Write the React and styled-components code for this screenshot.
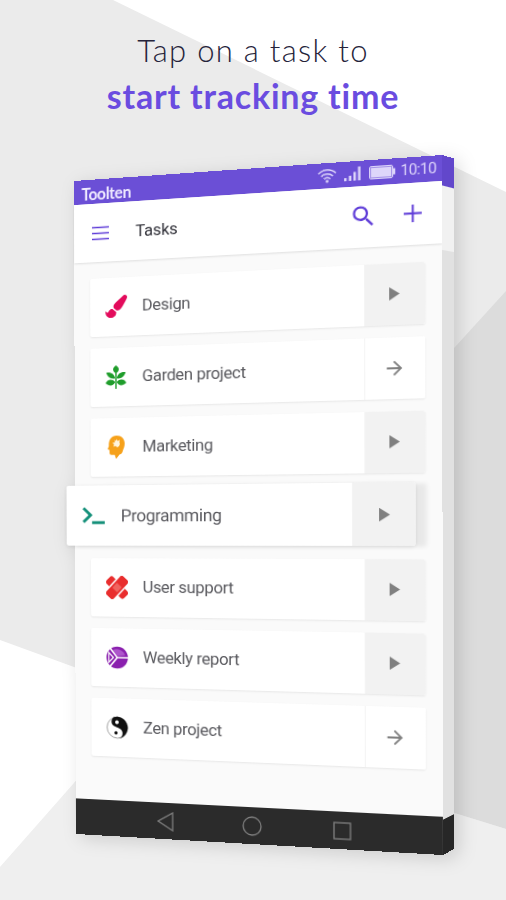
import styled, { createGlobalStyle } from "styled-components";
import { FaPaintBrush } from "react-icons/fa";
import { MdSearch, MdArrowForward } from "react-icons/md";

// matrix3d that maps a w x h box on four corners: tl, tr, br, bl
const project = (w, h, [[x0, y0], [x1, y1], [x2, y2], [x3, y3]]) => {
  const dx1 = x1 - x2;
  const dx2 = x3 - x2;
  const dx3 = x0 - x1 + x2 - x3;
  const dy1 = y1 - y2;
  const dy2 = y3 - y2;
  const dy3 = y0 - y1 + y2 - y3;
  const det = dx1 * dy2 - dx2 * dy1;
  const g = (dx3 * dy2 - dx2 * dy3) / det;
  const k = (dx1 * dy3 - dx3 * dy1) / det;
  const m = [
    (x1 - x0 + g * x1) / w, (y1 - y0 + g * y1) / w, 0, g / w,
    (x3 - x0 + k * x3) / h, (y3 - y0 + k * y3) / h, 0, k / h,
    0, 0, 1, 0,
    x0, y0, 0, 1,
  ];
  return `matrix3d(${m.map((n) => n.toFixed(9)).join(",")})`;
};

const GlobalStyle = createGlobalStyle`
  body {
    margin: 0;
    background: #ebebeb;
  }
  * {
    box-sizing: border-box;
  }
`;

const Page = styled.main`
  position: relative;
  width: 506px;
  height: 900px;
  overflow: hidden;
  background-color: #ebebeb;
  font-family: Roboto, "Liberation Sans", sans-serif;
`;

const Facet = styled.div`
  position: absolute;
  inset: 0;
  background-color: ${(props) => props.$color};
  clip-path: polygon(${(props) => props.$points});
`;

const Headline = styled.h1`
  position: relative;
  height: 155px;
  margin: 0;
  padding-top: 30px;
  text-align: center;
  font-family: Lato, sans-serif;
  font-size: 31px;
  font-weight: 300;
  line-height: 40px;
  letter-spacing: 1.3px;
  color: #25233a;
`;

const Strong = styled.span`
  display: block;
  margin-top: 6px;
  font-size: 34px;
  font-weight: 700;
  letter-spacing: 0.8px;
  color: #6a4ce0;
`;

const Device = styled.div`
  display: flex;
  margin-left: 74px;
  filter: drop-shadow(5px 4px 9px rgba(0, 0, 0, 0.14));
`;

const Front = styled.section`
  display: flex;
  flex-direction: column;
  flex: none;
  width: 368px;
  height: 676px;
  background-color: #fafafa;
  transform-origin: 0 0;
  transform: ${project(368, 676, [[0, 26], [368, 0], [369, 700], [2, 679]])};
`;

const Side = styled.div`
  display: flex;
  flex-direction: column;
  flex: none;
  width: 12px;
  height: 676px;
  background-color: #e1e1e1;
  transform-origin: 0 0;
  transform: ${project(12, 676, [[0, 0], [12, 3.5], [12, 694], [1, 700]])};
`;

const SideBand = styled.div`
  height: ${(props) => props.$height}px;
  margin-top: ${(props) => (props.$last ? "auto" : 0)};
  background-color: ${(props) => props.$color};
`;

const StatusBar = styled.div`
  display: flex;
  align-items: center;
  height: 25px;
  padding: 0 5px 0 8px;
  background-color: #6b4fd6;
  color: #ded6fa;
`;

const Brand = styled.span`
  flex: 1;
  padding-top: 4px;
  font-family: Lato, sans-serif;
  font-size: 16.5px;
  font-weight: 700;
  letter-spacing: -0.4px;
  color: #efeaff;
`;

const StatusIcons = styled.div`
  display: flex;
  align-items: center;
  gap: 7px;
`;

const Clock = styled.span`
  width: 34px;
  margin-left: -2px;
  font-size: 14.5px;
  letter-spacing: -0.5px;
`;

const Toolbar = styled.header`
  display: flex;
  align-items: center;
  height: 60px;
  padding: 0 19px 0 19px;
  background-color: #fff;
  box-shadow: 0 1px 2px rgba(0, 0, 0, 0.11);
  color: #5f3dd8;
`;

const Title = styled.h2`
  flex: 1;
  margin: -1px 0 0 28px;
  font-size: 17px;
  font-weight: 400;
  letter-spacing: -0.2px;
  color: #33333b;
`;

const ToolbarActions = styled.div`
  display: flex;
  align-items: center;
  gap: 25px;
  margin-top: -2px;
`;

const TaskList = styled.ul`
  display: flex;
  flex-direction: column;
  flex: 1;
  gap: 12px;
  margin: 0;
  padding: 16.5px 16.5px 0 16.5px;
  list-style: none;
`;

const Card = styled.li`
  display: flex;
  height: 60px;
  border-radius: 2px;
  background-color: #fff;
  box-shadow: ${(props) =>
    props.$raised
      ? "10px 1px 4px rgba(0, 0, 0, 0.07), 0 1px 4px rgba(0, 0, 0, 0.1)"
      : "0 1px 2px rgba(0, 0, 0, 0.08)"};
  transform: ${(props) =>
    props.$raised ? "translate(-17.7px, -2px) scale(1.05, 1.03)" : "none"};
`;

const TaskIcon = styled.span`
  display: flex;
  align-items: center;
  justify-content: center;
  width: 55px;
  color: ${(props) => props.$color};
`;

const TaskName = styled.span`
  flex: 1;
  align-self: center;
  margin-top: -1px;
  font-size: 17px;
  letter-spacing: -0.35px;
  color: #5a5a5f;
`;

const CardAction = styled.span`
  display: flex;
  align-items: center;
  justify-content: center;
  width: 58px;
  border-left: 1px solid #f4f4f4;
  border-radius: 0 2px 2px 0;
  background-color: ${(props) => (props.$filled ? "#f2f2f2" : "#fff")};
  color: #808080;
`;

const NavBar = styled.nav`
  display: flex;
  align-items: center;
  justify-content: center;
  gap: 70px;
  height: 37px;
  padding-right: 1px;
  background-color: #2b2b2b;
`;

const Wifi = () => (
  <svg width="19" height="15" viewBox="0 0 19 15" fill="none" stroke="currentColor" strokeWidth="1.5">
    <path d="M1 5.2a12.4 12.4 0 0 1 17 0M3.8 8a8.4 8.4 0 0 1 11.4 0M6.4 10.7a4.7 4.7 0 0 1 6.2 0" />
    <circle cx="9.5" cy="13" r="1.4" fill="currentColor" stroke="none" />
  </svg>
);

const Signal = () => (
  <svg width="17" height="15" viewBox="0 0 17 15" fill="currentColor">
    <path d="M0 11h2.4v3H0zM4.6 9H7v5H4.6zM9 5.5h2.4V14H9zM13.4 .5h2.4V14h-2.4z" />
  </svg>
);

const Battery = () => (
  <svg width="25" height="13" viewBox="0 0 25 13">
    <rect x=".5" y=".5" width="22" height="12" rx="1.5" fill="none" stroke="currentColor" />
    <rect x="1.5" y="1.5" width="20" height="10" fill="currentColor" />
    <path d="M23 3.5h2v6h-2z" fill="currentColor" />
  </svg>
);

const Burger = () => (
  <svg width="18" height="15" viewBox="0 0 18 15" stroke="currentColor" strokeWidth="1.7">
    <path d="M0 1.5h18M0 7.5h18M0 13.5h18" />
  </svg>
);

const Plus = () => (
  <svg width="17" height="17" viewBox="0 0 17 17" stroke="currentColor" strokeWidth="1.9">
    <path d="M0 8.5h17M8.5 0v17" />
  </svg>
);

const Play = () => (
  <svg width="10" height="13" viewBox="0 0 10 13">
    <path d="M0 0v13l10-6.5z" fill="currentColor" />
  </svg>
);

const Plant = () => (
  <svg width="22" height="24" viewBox="0 0 22 24" fill="currentColor">
    <path d="M11 0c4 2.800 4 5.400 0 8.200C7 5.400 7 2.800 11 0z" />
    <path d="M10.200 13.200C5.800 14.200 2.200 11.800 .8 7.200c4.800-.8 8.400 1.400 9.400 6zM11.800 13.200c4.400 1 8-1.400 9.400-6-4.800-.8-8.400 1.400-9.400 6z" />
    <path d="M10.200 17C8.500 21 4 21.800 0 18c2.500-4 6.500-4.600 10.200-1zM11.800 17c1.700 4 6.200 4.800 10.200 1-2.500-4-6.500-4.600-10.200-1z" />
    <path d="M10.300 8h1.400v16h-1.400z" />
  </svg>
);

const IdeaHead = () => (
  <svg width="18" height="24" viewBox="0 0 18 24">
    <path
      d="M9.5 0C14.5 0 18 3.5 18 8.3c0 3.5-1.3 5-2 7.5-.4 1.7-1.4 3.5-3.5 3.7L9 24l-1.5-4.3H4c-1.500 0-2-1-2-2.500v-2.400L0 13.700l1.300-3C.8 4.500 3.800 0 9.500 0z"
      fill="currentColor"
    />
    <path
      d="M9.500 3.500l1.200 2 2.200-1-.5 2.500.6 1.800-1 2.200-1.800 1-1.700-1.200-2.400.5 .8-2.400L5 7.200l2.700-.2-.2-2.500 1.500.8z"
      fill="#fff4dd"
    />
  </svg>
);

const Prompt = () => (
  <svg width="23" height="18" viewBox="0 0 23 18" fill="none" stroke="currentColor" strokeWidth="2.9">
    <path d="M1.3 1.5l7.2 7-7.2 7M10 16h13" />
  </svg>
);

const Bandages = () => (
  <svg width="23" height="24" viewBox="0 0 23 24" fill="currentColor">
    <rect x="-1.5" y="7" width="26" height="10" rx="3" transform="rotate(45 11.5 12)" />
    <rect
      x="-2.2"
      y="5.9"
      width="27.4"
      height="12.2"
      rx="3.5"
      transform="rotate(-47 11.5 12)"
      stroke="#fff"
      strokeWidth="1.5"
    />
    <rect x="8" y="8.5" width="7" height="7" fill="#f0645f" transform="rotate(-47 11.5 12)" />
  </svg>
);

const Pie = () => (
  <svg width="23" height="24" viewBox="0 0 23 24">
    <circle cx="11.5" cy="12" r="11.3" fill="currentColor" />
    <path d="M6.5 4.5A9.5 9.5 0 0 1 20 9.5l-8 1z" fill="#ad55cb" />
    <path d="M3.5 1.8L11.5 12H23M11.5 12L3.7 21.5" fill="none" stroke="#fff" strokeWidth="1.7" />
    <path d="M2.7 7v10l4.8-5z" fill="none" stroke="#fff" strokeWidth="1.2" />
  </svg>
);

const YinYang = () => (
  <svg width="23" height="24" viewBox="0 0 23 24">
    <circle cx="11.5" cy="12" r="10.9" fill="#fff" stroke="#888" strokeWidth=".8" />
    <path
      d="M8 1.3A11.2 11.2 0 1 1 13 23.1a5.5 5.5 0 0 0 .8-10.2C10 11.2 6.5 11 5.5 7.5 4.8 4.8 6 2.5 8 1.3z"
      fill="currentColor"
    />
    <circle cx="11" cy="6.5" r="1.9" fill="#fff" />
    <circle cx="10" cy="17.5" r="1.7" fill="currentColor" />
  </svg>
);

const tasks = [
  { name: "Design", color: "#e30b5c", icon: <FaPaintBrush size={23} />, running: true },
  { name: "Garden project", color: "#1f9d2b", icon: <Plant /> },
  { name: "Marketing", color: "#f6a11a", icon: <IdeaHead />, running: true },
  { name: "Programming", color: "#15907a", icon: <Prompt />, running: true, raised: true },
  { name: "User support", color: "#e92d2d", icon: <Bandages />, running: true },
  { name: "Weekly report", color: "#8a1fae", icon: <Pie />, running: true },
  { name: "Zen project", color: "#111", icon: <YinYang /> },
];

const App = () => {
  return (
    <Page>
      <GlobalStyle />
      <Facet $color="#fff" $points="113px 0, 506px 0, 506px 192px" />
      <Facet
        $color="#dcdcdc"
        $points="506px 291px, 455px 347px, 300px 517px, 300px 765px, 506px 829px"
      />
      <Facet
        $color="#efefef"
        $points="0 867px, 74px 783px, 200px 735px, 454px 813px, 506px 829px, 506px 900px, 0 900px"
      />
      <Facet
        $color="#fff"
        $points="0 640px, 74px 667px, 200px 713px, 136px 713px, 74px 783px, 0 867px"
      />
      <Headline>
        Tap on a task to
        <Strong>start tracking time</Strong>
      </Headline>
      <Device>
        <Front>
          <StatusBar>
            <Brand>Toolten</Brand>
            <StatusIcons>
              <Wifi />
              <Signal />
              <Battery />
              <Clock>10:10</Clock>
            </StatusIcons>
          </StatusBar>
          <Toolbar>
            <Burger />
            <Title>Tasks</Title>
            <ToolbarActions>
              <MdSearch size={27} />
              <Plus />
            </ToolbarActions>
          </Toolbar>
          <TaskList>
            {tasks.map((task) => (
              <Card key={task.name} $raised={task.raised}>
                <TaskIcon $color={task.color}>{task.icon}</TaskIcon>
                <TaskName>{task.name}</TaskName>
                <CardAction $filled={task.running}>
                  {task.running ? <Play /> : <MdArrowForward size={22} />}
                </CardAction>
              </Card>
            ))}
          </TaskList>
          <NavBar>
            <svg width="17" height="20" viewBox="0 0 17 20" fill="none" stroke="#808080" strokeWidth="1.3">
              <path d="M16 1v18L1 10z" />
            </svg>
            <svg width="20" height="20" viewBox="0 0 20 20" fill="none" stroke="#808080" strokeWidth="1.3">
              <circle cx="10" cy="10" r="9" />
            </svg>
            <svg width="18" height="18" viewBox="0 0 18 18" fill="none" stroke="#808080" strokeWidth="1.3">
              <rect x="1" y="1" width="16" height="16" />
            </svg>
          </NavBar>
        </Front>
        <Side>
          <SideBand $height={27} $color="#6247cb" />
          <SideBand $height={58} $color="#f1f1f1" />
          <SideBand $height={37} $color="#272727" $last />
        </Side>
      </Device>
    </Page>
  );
};

export default App;
